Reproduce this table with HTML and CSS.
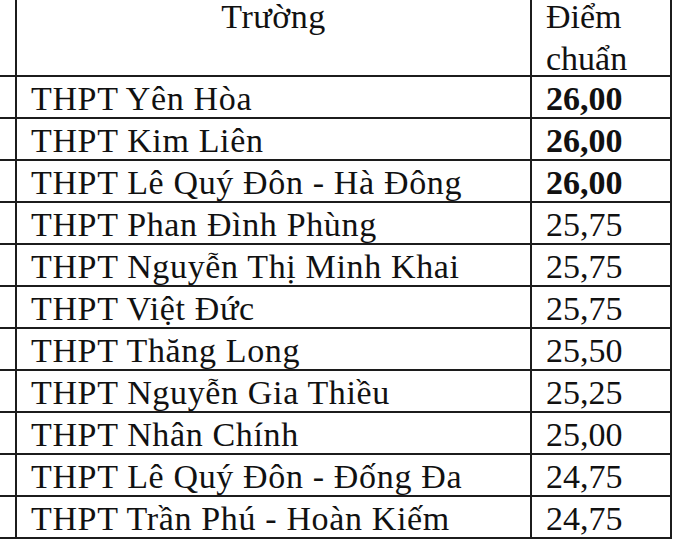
FILE: index.html
```html
<!DOCTYPE html>
<html lang="vi">
<head>
<meta charset="utf-8">
<title>Điểm chuẩn</title>
<link rel="stylesheet" href="styles.css">
</head>
<body>
<table class="scores">
  <colgroup>
    <col class="c-cut">
    <col class="c-name">
    <col class="c-score">
  </colgroup>
  <thead>
    <tr>
      <th class="cut"></th>
      <th class="name-head"><div class="head-box center">Trường</div></th>
      <th class="score-head"><div class="head-box">Điểm<br>chuẩn</div></th>
    </tr>
  </thead>
  <tbody>
    <tr><td class="cut"></td><td class="name">THPT Yên Hòa</td><td class="score bold">26,00</td></tr>
    <tr><td class="cut"></td><td class="name">THPT Kim Liên</td><td class="score bold">26,00</td></tr>
    <tr><td class="cut"></td><td class="name">THPT Lê Quý Đôn - Hà Đông</td><td class="score bold">26,00</td></tr>
    <tr><td class="cut"></td><td class="name">THPT Phan Đình Phùng</td><td class="score">25,75</td></tr>
    <tr><td class="cut"></td><td class="name">THPT Nguyễn Thị Minh Khai</td><td class="score">25,75</td></tr>
    <tr><td class="cut"></td><td class="name">THPT Việt Đức</td><td class="score">25,75</td></tr>
    <tr><td class="cut"></td><td class="name">THPT Thăng Long</td><td class="score">25,50</td></tr>
    <tr><td class="cut"></td><td class="name">THPT Nguyễn Gia Thiều</td><td class="score">25,25</td></tr>
    <tr><td class="cut"></td><td class="name">THPT Nhân Chính</td><td class="score">25,00</td></tr>
    <tr><td class="cut"></td><td class="name">THPT Lê Quý Đôn - Đống Đa</td><td class="score">24,75</td></tr>
    <tr><td class="cut"></td><td class="name">THPT Trần Phú - Hoàn Kiếm</td><td class="score">24,75</td></tr>
  </tbody>
</table>
</body>
</html>
```

FILE: styles.css
```css
html, body {
  margin: 0;
  padding: 0;
  background: #ffffff;
  overflow: hidden;
}

body {
  font-family: "Liberation Serif", "Times New Roman", serif;
  font-size: 34px;
  color: #111111;
}

.scores {
  border-collapse: separate;
  border-spacing: 0;
  table-layout: fixed;
  width: 672px;
  margin-top: -6px;
}

.c-cut { width: 17px; }
.c-name { width: 515px; }
.c-score { width: 140px; }

.scores th,
.scores td {
  box-sizing: border-box;
  border-right: 2px solid #1c1c1c;
  border-bottom: 2px solid #1c1c1c;
  padding: 3px 0 0 14px;
  line-height: 37px;
  text-align: left;
  vertical-align: top;
  white-space: nowrap;
  font-weight: normal;
}

.scores th {
  padding: 0 0 0 14px;
}

.scores .cut {
  padding: 0;
}

.scores .name-head {
  padding: 0;
  letter-spacing: 0.5px;
}

.scores .name {
  letter-spacing: 0.65px;
}

.head-box {
  box-sizing: border-box;
  height: 81px;
  padding-top: 2px;
  line-height: 42px;
}

.head-box.center {
  text-align: center;
}

.scores .bold {
  font-weight: bold;
}
```
